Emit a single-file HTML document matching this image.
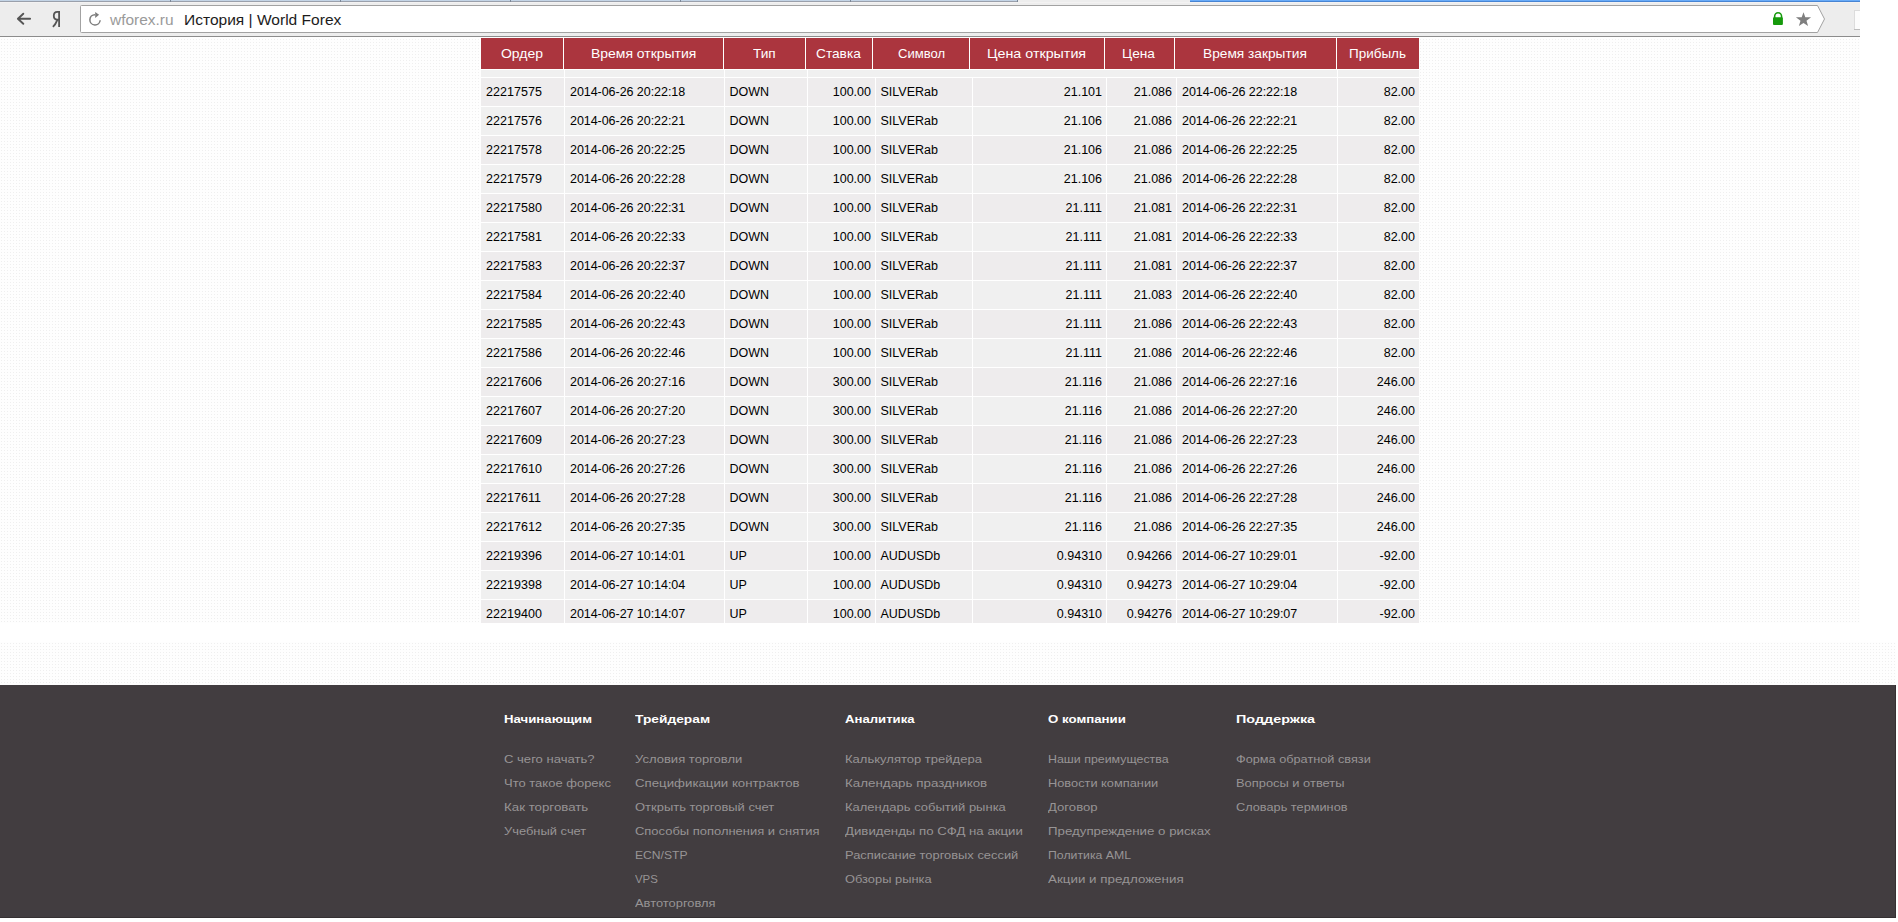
<!DOCTYPE html>
<html><head><meta charset="utf-8"><title>История | World Forex</title>
<style>
html,body{margin:0;padding:0;background:#fff;}
body{width:1898px;height:922px;position:relative;overflow:hidden;font-family:"Liberation Sans", sans-serif;}
#top{position:absolute;left:0;top:0;width:1860px;height:623px;overflow:hidden;
 background-color:#fefefe;
 background-image:linear-gradient(90deg,#fefefe 0,#fefefe 2px,transparent 2px,transparent 3px),linear-gradient(180deg,#fefefe 0,#fefefe 2px,#efefef 2px,#efefef 3px);
 background-size:3px 3px;background-position:2px 1px;}
#bot{position:absolute;left:0;top:642px;width:1896px;height:276px;overflow:hidden;
 background-color:#fefefe;
 background-image:linear-gradient(90deg,#fefefe 0,#fefefe 2px,transparent 2px,transparent 3px),linear-gradient(180deg,#fefefe 0,#fefefe 2px,#efefef 2px,#efefef 3px);
 background-size:3px 3px;background-position:2px 2px;}
#foot{position:absolute;left:0;top:43px;width:1896px;height:233px;background:#423d40;box-sizing:border-box;border-right:1px solid #353032;border-bottom:1px solid #353032;}
#bar{position:absolute;left:0;top:0;width:1860px;height:37px;background:#ededed;}
#bar .l0{position:absolute;left:0;top:0;width:1018px;height:1px;background:#c3d4e6;}
#bar .l1{position:absolute;left:0;top:1px;width:1018px;height:1px;background:#9aa0ab;}
#bar .l2{position:absolute;left:0;top:2px;width:1860px;height:1px;background:#f3f2f2;}
#bar .lb{position:absolute;left:0;top:36px;width:1860px;height:1px;background:#8c8c8c;}
#bar .blue{position:absolute;left:1190px;top:0;width:670px;height:1px;background:#68abf8;border-bottom:1px solid #4784d2;}

#omni{position:absolute;left:0;top:0;}
.tk{position:absolute;top:0;width:1px;height:2px;background:#7b8797;}
#tw{position:absolute;left:481px;top:38px;width:938px;height:585px;background:#fff;}
.h{position:absolute;top:38px;height:31px;background:#ab353e;}
.c{position:absolute;height:28px;line-height:28px;padding:0 5px;background:#eeeced;font-size:12.5px;color:#000;white-space:nowrap;}
.c.r{text-align:right;padding:0 4px 0 6px;}
.c.o{background:#f0f0f0;}
.c.d{letter-spacing:-0.05px;}
.c.n{letter-spacing:0.05px;}
.c.s{padding:0 5.5px 0 4.5px;}
.t{position:absolute;white-space:nowrap;transform-origin:0 0;line-height:normal;}
</style></head>
<body>
<div id="top">
<div id="bar"><div class="l0"></div><div class="l1"></div><div class="l2"></div><div class="blue"></div><div class="tk" style="left:170px"></div><div class="tk" style="left:340px"></div><div class="tk" style="left:510px"></div><div class="tk" style="left:680px"></div><div class="tk" style="left:850px"></div><div class="tk" style="left:1017px"></div><div class="lb"></div>
<svg id="omni" width="1860" height="37" viewBox="0 0 1860 37">
<path d="M81.5 5.5 H1817.5 L1824.5 19 L1817.5 32.5 H81.5 Q80.5 32.5 80.5 31.5 V6.5 Q80.5 5.5 81.5 5.5 Z" fill="#fff" stroke="#a2a2a2" stroke-width="1"/>
<path d="M30.1 18.75 H18.2 M23.3 13.75 L17.9 18.75 L23.3 23.75" fill="none" stroke="#555" stroke-width="1.9" stroke-linecap="round" stroke-linejoin="round"/>
<path d="M59.1 11 V27 M59.1 11.9 H57.3 C54.9 11.9 53.8 13.6 53.8 15.7 C53.8 17.9 55 19.6 57.3 19.6 H59.1 M57.4 19.8 Q55.5 24.5 52.9 26.9" fill="none" stroke="#555" stroke-width="1.8"/>
<path d="M95 14.65 A5.15 5.15 0 1 0 100.15 20.2" fill="none" stroke="#7c7c7c" stroke-width="1.5"/>
<path d="M95.2 11.9 L99.1 14.75 L95.2 17.9 Z" fill="#7c7c7c"/>
<path d="M1774.65 18 V16.2 A3.45 3.45 0 0 1 1781.55 16.2 V18" fill="none" stroke="#169a0c" stroke-width="1.6"/>
<rect x="1773" y="17.2" width="9.9" height="7.8" rx="1" fill="#169a0c"/>
<path d="M1803.5 12.2 L1805.3 17.2 L1811.1 17.3 L1806.5 20.8 L1808.1 26.1 L1803.5 22.9 L1798.9 26.1 L1800.5 20.8 L1795.9 17.3 L1801.7 17.2 Z" fill="#7f7f7f"/>
<rect x="1854.5" y="10.5" width="8" height="19" fill="#fcfcfc" stroke="#dcdcdc"/><path d="M1854 29.5 H1862" stroke="#bdbdbd" stroke-width="1"/>
</svg>

</div>
<div id="tw"></div>
<div class="h" style="left:481px;width:82px"></div><div class="h" style="left:564px;width:159px"></div><div class="h" style="left:724px;width:81px"></div><div class="h" style="left:806px;width:66px"></div><div class="h" style="left:873px;width:96px"></div><div class="h" style="left:970px;width:134px"></div><div class="h" style="left:1105px;width:69px"></div><div class="h" style="left:1175px;width:161px"></div><div class="h" style="left:1337px;width:82px"></div>
<div class="c" style="left:481px;top:70px;width:83px;height:7px;padding:0;background:#f0f0f0"></div><div class="c" style="left:565px;top:70px;width:159px;height:7px;padding:0;background:#f0f0f0"></div><div class="c" style="left:725px;top:70px;width:82px;height:7px;padding:0;background:#f0f0f0"></div><div class="c" style="left:808px;top:70px;width:529px;height:7px;padding:0;background:#f0f0f0"></div><div class="c" style="left:1338px;top:70px;width:81px;height:7px;padding:0;background:#f0f0f0"></div><div class="c n" style="left:481px;top:78px;width:73px">22217575</div><div class="c d" style="left:565px;top:78px;width:149px">2014-06-26 20:22:18</div><div class="c s" style="left:725px;top:78px;width:72px">DOWN</div><div class="c r" style="left:808px;top:78px;width:57px">100.00</div><div class="c s" style="left:876px;top:78px;width:86px">SILVERab</div><div class="c r" style="left:973px;top:78px;width:123px">21.101</div><div class="c r" style="left:1107px;top:78px;width:59px">21.086</div><div class="c d" style="left:1177px;top:78px;width:150px">2014-06-26 22:22:18</div><div class="c r" style="left:1338px;top:78px;width:71px">82.00</div><div class="c o n" style="left:481px;top:107px;width:73px">22217576</div><div class="c o d" style="left:565px;top:107px;width:149px">2014-06-26 20:22:21</div><div class="c o s" style="left:725px;top:107px;width:72px">DOWN</div><div class="c r o" style="left:808px;top:107px;width:57px">100.00</div><div class="c o s" style="left:876px;top:107px;width:86px">SILVERab</div><div class="c r o" style="left:973px;top:107px;width:123px">21.106</div><div class="c r o" style="left:1107px;top:107px;width:59px">21.086</div><div class="c o d" style="left:1177px;top:107px;width:150px">2014-06-26 22:22:21</div><div class="c r o" style="left:1338px;top:107px;width:71px">82.00</div><div class="c n" style="left:481px;top:136px;width:73px">22217578</div><div class="c d" style="left:565px;top:136px;width:149px">2014-06-26 20:22:25</div><div class="c s" style="left:725px;top:136px;width:72px">DOWN</div><div class="c r" style="left:808px;top:136px;width:57px">100.00</div><div class="c s" style="left:876px;top:136px;width:86px">SILVERab</div><div class="c r" style="left:973px;top:136px;width:123px">21.106</div><div class="c r" style="left:1107px;top:136px;width:59px">21.086</div><div class="c d" style="left:1177px;top:136px;width:150px">2014-06-26 22:22:25</div><div class="c r" style="left:1338px;top:136px;width:71px">82.00</div><div class="c o n" style="left:481px;top:165px;width:73px">22217579</div><div class="c o d" style="left:565px;top:165px;width:149px">2014-06-26 20:22:28</div><div class="c o s" style="left:725px;top:165px;width:72px">DOWN</div><div class="c r o" style="left:808px;top:165px;width:57px">100.00</div><div class="c o s" style="left:876px;top:165px;width:86px">SILVERab</div><div class="c r o" style="left:973px;top:165px;width:123px">21.106</div><div class="c r o" style="left:1107px;top:165px;width:59px">21.086</div><div class="c o d" style="left:1177px;top:165px;width:150px">2014-06-26 22:22:28</div><div class="c r o" style="left:1338px;top:165px;width:71px">82.00</div><div class="c n" style="left:481px;top:194px;width:73px">22217580</div><div class="c d" style="left:565px;top:194px;width:149px">2014-06-26 20:22:31</div><div class="c s" style="left:725px;top:194px;width:72px">DOWN</div><div class="c r" style="left:808px;top:194px;width:57px">100.00</div><div class="c s" style="left:876px;top:194px;width:86px">SILVERab</div><div class="c r" style="left:973px;top:194px;width:123px">21.111</div><div class="c r" style="left:1107px;top:194px;width:59px">21.081</div><div class="c d" style="left:1177px;top:194px;width:150px">2014-06-26 22:22:31</div><div class="c r" style="left:1338px;top:194px;width:71px">82.00</div><div class="c o n" style="left:481px;top:223px;width:73px">22217581</div><div class="c o d" style="left:565px;top:223px;width:149px">2014-06-26 20:22:33</div><div class="c o s" style="left:725px;top:223px;width:72px">DOWN</div><div class="c r o" style="left:808px;top:223px;width:57px">100.00</div><div class="c o s" style="left:876px;top:223px;width:86px">SILVERab</div><div class="c r o" style="left:973px;top:223px;width:123px">21.111</div><div class="c r o" style="left:1107px;top:223px;width:59px">21.081</div><div class="c o d" style="left:1177px;top:223px;width:150px">2014-06-26 22:22:33</div><div class="c r o" style="left:1338px;top:223px;width:71px">82.00</div><div class="c n" style="left:481px;top:252px;width:73px">22217583</div><div class="c d" style="left:565px;top:252px;width:149px">2014-06-26 20:22:37</div><div class="c s" style="left:725px;top:252px;width:72px">DOWN</div><div class="c r" style="left:808px;top:252px;width:57px">100.00</div><div class="c s" style="left:876px;top:252px;width:86px">SILVERab</div><div class="c r" style="left:973px;top:252px;width:123px">21.111</div><div class="c r" style="left:1107px;top:252px;width:59px">21.081</div><div class="c d" style="left:1177px;top:252px;width:150px">2014-06-26 22:22:37</div><div class="c r" style="left:1338px;top:252px;width:71px">82.00</div><div class="c o n" style="left:481px;top:281px;width:73px">22217584</div><div class="c o d" style="left:565px;top:281px;width:149px">2014-06-26 20:22:40</div><div class="c o s" style="left:725px;top:281px;width:72px">DOWN</div><div class="c r o" style="left:808px;top:281px;width:57px">100.00</div><div class="c o s" style="left:876px;top:281px;width:86px">SILVERab</div><div class="c r o" style="left:973px;top:281px;width:123px">21.111</div><div class="c r o" style="left:1107px;top:281px;width:59px">21.083</div><div class="c o d" style="left:1177px;top:281px;width:150px">2014-06-26 22:22:40</div><div class="c r o" style="left:1338px;top:281px;width:71px">82.00</div><div class="c n" style="left:481px;top:310px;width:73px">22217585</div><div class="c d" style="left:565px;top:310px;width:149px">2014-06-26 20:22:43</div><div class="c s" style="left:725px;top:310px;width:72px">DOWN</div><div class="c r" style="left:808px;top:310px;width:57px">100.00</div><div class="c s" style="left:876px;top:310px;width:86px">SILVERab</div><div class="c r" style="left:973px;top:310px;width:123px">21.111</div><div class="c r" style="left:1107px;top:310px;width:59px">21.086</div><div class="c d" style="left:1177px;top:310px;width:150px">2014-06-26 22:22:43</div><div class="c r" style="left:1338px;top:310px;width:71px">82.00</div><div class="c o n" style="left:481px;top:339px;width:73px">22217586</div><div class="c o d" style="left:565px;top:339px;width:149px">2014-06-26 20:22:46</div><div class="c o s" style="left:725px;top:339px;width:72px">DOWN</div><div class="c r o" style="left:808px;top:339px;width:57px">100.00</div><div class="c o s" style="left:876px;top:339px;width:86px">SILVERab</div><div class="c r o" style="left:973px;top:339px;width:123px">21.111</div><div class="c r o" style="left:1107px;top:339px;width:59px">21.086</div><div class="c o d" style="left:1177px;top:339px;width:150px">2014-06-26 22:22:46</div><div class="c r o" style="left:1338px;top:339px;width:71px">82.00</div><div class="c n" style="left:481px;top:368px;width:73px">22217606</div><div class="c d" style="left:565px;top:368px;width:149px">2014-06-26 20:27:16</div><div class="c s" style="left:725px;top:368px;width:72px">DOWN</div><div class="c r" style="left:808px;top:368px;width:57px">300.00</div><div class="c s" style="left:876px;top:368px;width:86px">SILVERab</div><div class="c r" style="left:973px;top:368px;width:123px">21.116</div><div class="c r" style="left:1107px;top:368px;width:59px">21.086</div><div class="c d" style="left:1177px;top:368px;width:150px">2014-06-26 22:27:16</div><div class="c r" style="left:1338px;top:368px;width:71px">246.00</div><div class="c o n" style="left:481px;top:397px;width:73px">22217607</div><div class="c o d" style="left:565px;top:397px;width:149px">2014-06-26 20:27:20</div><div class="c o s" style="left:725px;top:397px;width:72px">DOWN</div><div class="c r o" style="left:808px;top:397px;width:57px">300.00</div><div class="c o s" style="left:876px;top:397px;width:86px">SILVERab</div><div class="c r o" style="left:973px;top:397px;width:123px">21.116</div><div class="c r o" style="left:1107px;top:397px;width:59px">21.086</div><div class="c o d" style="left:1177px;top:397px;width:150px">2014-06-26 22:27:20</div><div class="c r o" style="left:1338px;top:397px;width:71px">246.00</div><div class="c n" style="left:481px;top:426px;width:73px">22217609</div><div class="c d" style="left:565px;top:426px;width:149px">2014-06-26 20:27:23</div><div class="c s" style="left:725px;top:426px;width:72px">DOWN</div><div class="c r" style="left:808px;top:426px;width:57px">300.00</div><div class="c s" style="left:876px;top:426px;width:86px">SILVERab</div><div class="c r" style="left:973px;top:426px;width:123px">21.116</div><div class="c r" style="left:1107px;top:426px;width:59px">21.086</div><div class="c d" style="left:1177px;top:426px;width:150px">2014-06-26 22:27:23</div><div class="c r" style="left:1338px;top:426px;width:71px">246.00</div><div class="c o n" style="left:481px;top:455px;width:73px">22217610</div><div class="c o d" style="left:565px;top:455px;width:149px">2014-06-26 20:27:26</div><div class="c o s" style="left:725px;top:455px;width:72px">DOWN</div><div class="c r o" style="left:808px;top:455px;width:57px">300.00</div><div class="c o s" style="left:876px;top:455px;width:86px">SILVERab</div><div class="c r o" style="left:973px;top:455px;width:123px">21.116</div><div class="c r o" style="left:1107px;top:455px;width:59px">21.086</div><div class="c o d" style="left:1177px;top:455px;width:150px">2014-06-26 22:27:26</div><div class="c r o" style="left:1338px;top:455px;width:71px">246.00</div><div class="c n" style="left:481px;top:484px;width:73px">22217611</div><div class="c d" style="left:565px;top:484px;width:149px">2014-06-26 20:27:28</div><div class="c s" style="left:725px;top:484px;width:72px">DOWN</div><div class="c r" style="left:808px;top:484px;width:57px">300.00</div><div class="c s" style="left:876px;top:484px;width:86px">SILVERab</div><div class="c r" style="left:973px;top:484px;width:123px">21.116</div><div class="c r" style="left:1107px;top:484px;width:59px">21.086</div><div class="c d" style="left:1177px;top:484px;width:150px">2014-06-26 22:27:28</div><div class="c r" style="left:1338px;top:484px;width:71px">246.00</div><div class="c o n" style="left:481px;top:513px;width:73px">22217612</div><div class="c o d" style="left:565px;top:513px;width:149px">2014-06-26 20:27:35</div><div class="c o s" style="left:725px;top:513px;width:72px">DOWN</div><div class="c r o" style="left:808px;top:513px;width:57px">300.00</div><div class="c o s" style="left:876px;top:513px;width:86px">SILVERab</div><div class="c r o" style="left:973px;top:513px;width:123px">21.116</div><div class="c r o" style="left:1107px;top:513px;width:59px">21.086</div><div class="c o d" style="left:1177px;top:513px;width:150px">2014-06-26 22:27:35</div><div class="c r o" style="left:1338px;top:513px;width:71px">246.00</div><div class="c n" style="left:481px;top:542px;width:73px">22219396</div><div class="c d" style="left:565px;top:542px;width:149px">2014-06-27 10:14:01</div><div class="c s" style="left:725px;top:542px;width:72px">UP</div><div class="c r" style="left:808px;top:542px;width:57px">100.00</div><div class="c s" style="left:876px;top:542px;width:86px">AUDUSDb</div><div class="c r" style="left:973px;top:542px;width:123px">0.94310</div><div class="c r" style="left:1107px;top:542px;width:59px">0.94266</div><div class="c d" style="left:1177px;top:542px;width:150px">2014-06-27 10:29:01</div><div class="c r" style="left:1338px;top:542px;width:71px">-92.00</div><div class="c o n" style="left:481px;top:571px;width:73px">22219398</div><div class="c o d" style="left:565px;top:571px;width:149px">2014-06-27 10:14:04</div><div class="c o s" style="left:725px;top:571px;width:72px">UP</div><div class="c r o" style="left:808px;top:571px;width:57px">100.00</div><div class="c o s" style="left:876px;top:571px;width:86px">AUDUSDb</div><div class="c r o" style="left:973px;top:571px;width:123px">0.94310</div><div class="c r o" style="left:1107px;top:571px;width:59px">0.94273</div><div class="c o d" style="left:1177px;top:571px;width:150px">2014-06-27 10:29:04</div><div class="c r o" style="left:1338px;top:571px;width:71px">-92.00</div><div class="c n" style="left:481px;top:600px;width:73px">22219400</div><div class="c d" style="left:565px;top:600px;width:149px">2014-06-27 10:14:07</div><div class="c s" style="left:725px;top:600px;width:72px">UP</div><div class="c r" style="left:808px;top:600px;width:57px">100.00</div><div class="c s" style="left:876px;top:600px;width:86px">AUDUSDb</div><div class="c r" style="left:973px;top:600px;width:123px">0.94310</div><div class="c r" style="left:1107px;top:600px;width:59px">0.94276</div><div class="c d" style="left:1177px;top:600px;width:150px">2014-06-27 10:29:07</div><div class="c r" style="left:1338px;top:600px;width:71px">-92.00</div>
<span class="t" style="left:501.00px;top:46.00px;font-size:13.5px;color:#fff;transform:scaleX(1.0353);">Ордер</span><span class="t" style="left:590.67px;top:46.00px;font-size:13.5px;color:#fff;transform:scaleX(1.0328);">Время открытия</span><span class="t" style="left:753.10px;top:46.00px;font-size:13.5px;color:#fff;transform:scaleX(1.0093);">Тип</span><span class="t" style="left:816.20px;top:46.00px;font-size:13.5px;color:#fff;transform:scaleX(1.0142);">Ставка</span><span class="t" style="left:898.00px;top:46.00px;font-size:13.5px;color:#fff;transform:scaleX(0.9665);">Символ</span><span class="t" style="left:986.64px;top:46.00px;font-size:13.5px;color:#fff;transform:scaleX(1.0568);">Цена открытия</span><span class="t" style="left:1121.79px;top:46.00px;font-size:13.5px;color:#fff;transform:scaleX(1.0141);">Цена</span><span class="t" style="left:1202.88px;top:46.00px;font-size:13.5px;color:#fff;transform:scaleX(1.0158);">Время закрытия</span><span class="t" style="left:1348.90px;top:46.00px;font-size:13.5px;color:#fff;transform:scaleX(0.9971);">Прибыль</span><span class="t" style="left:110.13px;top:10.90px;font-size:15px;color:#9a9a9a;transform:scaleX(1.0298);">wforex.ru</span><span class="t" style="left:183.96px;top:10.90px;font-size:15px;color:#1c1c1c;transform:scaleX(1.0363);">История | World Forex</span>
</div>
<div id="bot">
<div id="foot"></div>
<span class="t" style="left:504.30px;top:71.00px;font-size:11.3px;color:#fff;transform:scaleX(1.1697);font-weight:700;">Начинающим</span><span class="t" style="left:504.30px;top:111.00px;font-size:11.5px;color:#979495;transform:scaleX(1.1361);">С чего начать?</span><span class="t" style="left:504.30px;top:135.00px;font-size:11.5px;color:#979495;transform:scaleX(1.1298);">Что такое форекс</span><span class="t" style="left:504.30px;top:159.00px;font-size:11.5px;color:#979495;transform:scaleX(1.1551);">Как торговать</span><span class="t" style="left:504.30px;top:183.00px;font-size:11.5px;color:#979495;transform:scaleX(1.1228);">Учебный счет</span><span class="t" style="left:635.40px;top:71.00px;font-size:11.3px;color:#fff;transform:scaleX(1.2199);font-weight:700;">Трейдерам</span><span class="t" style="left:635.40px;top:111.00px;font-size:11.5px;color:#979495;transform:scaleX(1.1336);">Условия торговли</span><span class="t" style="left:635.40px;top:135.00px;font-size:11.5px;color:#979495;transform:scaleX(1.1520);">Спецификации контрактов</span><span class="t" style="left:635.40px;top:159.00px;font-size:11.5px;color:#979495;transform:scaleX(1.1276);">Открыть торговый счет</span><span class="t" style="left:635.40px;top:183.00px;font-size:11.5px;color:#979495;transform:scaleX(1.1264);">Способы пополнения и снятия</span><span class="t" style="left:635.40px;top:207.00px;font-size:11.5px;color:#979495;transform:scaleX(1.0524);">ECN/STP</span><span class="t" style="left:635.40px;top:231.00px;font-size:11.5px;color:#979495;transform:scaleX(0.9940);">VPS</span><span class="t" style="left:635.40px;top:255.00px;font-size:11.5px;color:#979495;transform:scaleX(1.1210);">Автоторговля</span><span class="t" style="left:845.10px;top:71.00px;font-size:11.3px;color:#fff;transform:scaleX(1.1633);font-weight:700;">Аналитика</span><span class="t" style="left:845.10px;top:111.00px;font-size:11.5px;color:#979495;transform:scaleX(1.1325);">Калькулятор трейдера</span><span class="t" style="left:845.10px;top:135.00px;font-size:11.5px;color:#979495;transform:scaleX(1.1629);">Календарь праздников</span><span class="t" style="left:845.10px;top:159.00px;font-size:11.5px;color:#979495;transform:scaleX(1.1296);">Календарь событий рынка</span><span class="t" style="left:845.10px;top:183.00px;font-size:11.5px;color:#979495;transform:scaleX(1.1503);">Дивиденды по СФД на акции</span><span class="t" style="left:845.10px;top:207.00px;font-size:11.5px;color:#979495;transform:scaleX(1.1202);">Расписание торговых сессий</span><span class="t" style="left:845.10px;top:231.00px;font-size:11.5px;color:#979495;transform:scaleX(1.1196);">Обзоры рынка</span><span class="t" style="left:1048.10px;top:71.00px;font-size:11.3px;color:#fff;transform:scaleX(1.1745);font-weight:700;">О компании</span><span class="t" style="left:1048.10px;top:111.00px;font-size:11.5px;color:#979495;transform:scaleX(1.0782);">Наши преимущества</span><span class="t" style="left:1048.10px;top:135.00px;font-size:11.5px;color:#979495;transform:scaleX(1.1129);">Новости компании</span><span class="t" style="left:1048.10px;top:159.00px;font-size:11.5px;color:#979495;transform:scaleX(1.1411);">Договор</span><span class="t" style="left:1048.10px;top:183.00px;font-size:11.5px;color:#979495;transform:scaleX(1.1547);">Предупреждение о рисках</span><span class="t" style="left:1048.10px;top:207.00px;font-size:11.5px;color:#979495;transform:scaleX(1.0694);">Политика AML</span><span class="t" style="left:1048.10px;top:231.00px;font-size:11.5px;color:#979495;transform:scaleX(1.1633);">Акции и предложения</span><span class="t" style="left:1236.30px;top:71.00px;font-size:11.3px;color:#fff;transform:scaleX(1.2716);font-weight:700;">Поддержка</span><span class="t" style="left:1236.30px;top:111.00px;font-size:11.5px;color:#979495;transform:scaleX(1.1061);">Форма обратной связи</span><span class="t" style="left:1236.30px;top:135.00px;font-size:11.5px;color:#979495;transform:scaleX(1.1202);">Вопросы и ответы</span><span class="t" style="left:1236.30px;top:159.00px;font-size:11.5px;color:#979495;transform:scaleX(1.1084);">Словарь терминов</span>
</div>
</body></html>
